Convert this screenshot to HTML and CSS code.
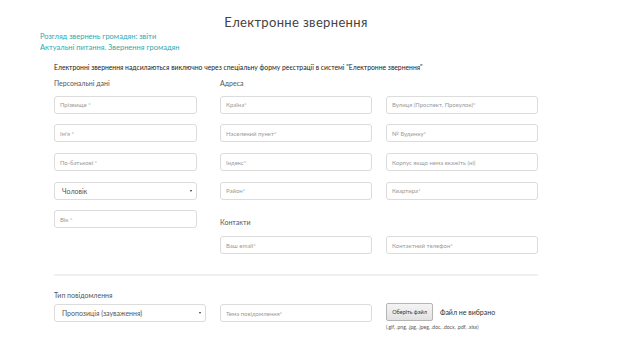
FILE: index.html
```html
<!DOCTYPE html>
<html lang="uk">
<head>
<meta charset="utf-8">
<title>Електронне звернення</title>
<link rel="stylesheet" href="styles.css">
</head>
<body>
<div class="page">
  <h1 class="title">Електронне звернення</h1>
  <div class="links">
    <a href="#" class="link">Розгляд звернень громадян: звіти</a>
    <a href="#" class="link">Актуальні питання. Звернення громадян</a>
  </div>
  <form class="form">
    <p class="notice">Електронні звернення надсилаються виключно через спеціальну форму реєстрації в системі "Електронне звернення"</p>
    <div class="grid">
      <div class="col col-first">
        <div class="heading">Персональні дані</div>
        <input class="field" placeholder="Прізвище *">
        <input class="field" placeholder="Ім'я *">
        <input class="field" placeholder="По-батькові *">
        <div class="select-wrap"><select class="field select"><option>Чоловік</option><option>Жінка</option></select></div>
        <input class="field" placeholder="Вік *">
      </div>
      <div class="col">
        <div class="heading">Адреса</div>
        <input class="field" placeholder="Країна*">
        <input class="field" placeholder="Населений пункт*">
        <input class="field" placeholder="Індекс*">
        <input class="field" placeholder="Район*">
        <div class="heading heading-sub">Контакти</div>
        <input class="field" placeholder="Ваш email*">
      </div>
      <div class="col">
        <div class="heading">&nbsp;</div>
        <input class="field" placeholder="Вулиця (Проспект, Провулок)*">
        <input class="field" placeholder="№ Будинку*">
        <input class="field" placeholder="Корпус якщо нема вкажіть (ні)">
        <input class="field" placeholder="Квартира*">
        <div class="heading heading-sub">&nbsp;</div>
        <input class="field" placeholder="Контактний телефон*">
      </div>
    </div>
    <hr class="divider">
    <div class="grid grid-bottom">
      <div class="col">
        <div class="heading">Тип повідомлення</div>
        <div class="select-wrap"><select class="field select"><option>Пропозиція (зауваження)</option><option>Заява (клопотання)</option><option>Скарга</option></select></div>
      </div>
      <div class="col">
        <div class="heading">&nbsp;</div>
        <input class="field" placeholder="Тема повідомлення*">
      </div>
      <div class="col">
        <div class="heading">&nbsp;</div>
        <div class="file-row">
          <button type="button" class="file-btn">Оберіть файл</button>
          <span class="file-status">Файл не вибрано</span>
        </div>
        <div class="file-hint">(.gif, .png, .jpg, .jpeg, .doc, .docx, .pdf, .xlsx)</div>
      </div>
    </div>
  </form>
</div>
</body>
</html>
```

FILE: styles.css
```css
* { box-sizing: border-box; }
html, body { margin: 0; padding: 0; background: #fff; }
body {
  font-family: Lato, "Open Sans", "Noto Sans", sans-serif;
  color: #333;
}
.page {
  width: 512px;
  margin-left: 40px;
  padding-top: 12px;
}
.title {
  margin: 0;
  text-align: center;
  font-size: 13px;
  font-weight: 400;
  line-height: 20px;
  color: #444;
  letter-spacing: 0.35px;
}
.links {
  display: flex;
  flex-direction: column;
  margin-top: -1px;
}
.link {
  font-size: 7.5px;
  line-height: 11px;
  color: #2fa9ad;
  text-decoration: none;
}
.form {
  padding: 0 14px;
}
.notice {
  margin: 9px 0 0;
  font-size: 6.8px;
  line-height: 11px;
  color: #222;
}
.grid {
  display: grid;
  grid-template-columns: 166px 166px 152px;
  margin-top: 5px;
}
.col {
  display: flex;
  flex-direction: column;
  align-items: flex-start;
  gap: 10.7px;
}
.heading {
  font-size: 7px;
  line-height: 11px;
  color: #555;
  margin-bottom: -4px;
}
.heading-sub {
  margin-top: 7px;
  margin-bottom: -3px;
}
.field {
  display: block;
  width: 152px;
  height: 18px;
  margin: 0;
  border: 1px solid #dcdcdc;
  border-radius: 3px;
  padding: 0 5px;
  font-family: Lato, "Open Sans", sans-serif;
  font-size: 6px;
  color: #555;
  background: #fff;
  outline: none;
}
.col-first .field { width: 143px; }
.field::placeholder { color: #9a9a9a; }
.select-wrap {
  position: relative;
  display: block;
  height: 18px;
}
.select {
  appearance: none;
  -webkit-appearance: none;
  font-size: 7px;
  padding-left: 7px;
  color: #555;
}
.select-wrap::after {
  content: "";
  position: absolute;
  right: 5px;
  top: 8px;
  border-left: 1.5px solid transparent;
  border-right: 1.5px solid transparent;
  border-top: 2.5px solid #333;
}
.divider {
  margin: 20px 0 0;
  border: 0;
  height: 2px;
  background: #f0f0f0;
}
.grid-bottom {
  margin-top: 14px;
}
.grid-bottom .col { gap: 0; }
.grid-bottom .heading { margin-bottom: 3px; }
.file-row {
  display: flex;
  align-items: center;
  gap: 7px;
  margin-top: -1px;
}
.file-btn {
  width: 47px;
  height: 18px;
  padding: 0;
  border: 1px solid #b5b5b5;
  border-radius: 2px;
  background: linear-gradient(#f4f4f4, #e2e2e2);
  font-family: Lato, "Open Sans", sans-serif;
  font-size: 5.5px;
  color: #333;
}
.file-status {
  font-size: 7px;
  color: #333;
}
.file-hint {
  margin-top: 2px;
  font-size: 5px;
  line-height: 8px;
  color: #555;
}
```
